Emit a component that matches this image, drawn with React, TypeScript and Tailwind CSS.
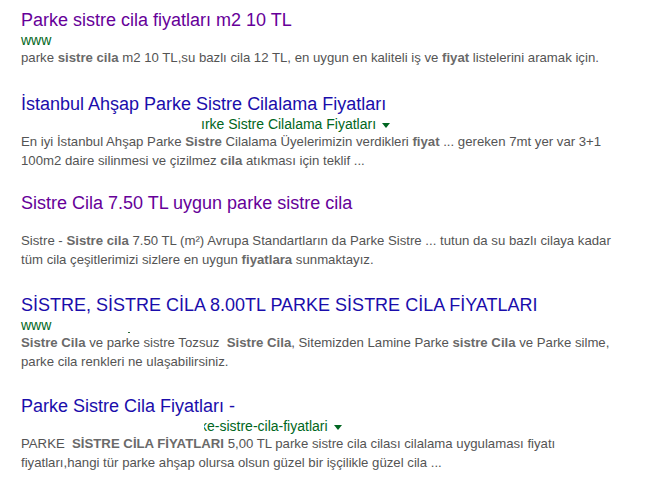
import React from "react";

const Arrow = () => (
  <span className="ml-[6px] inline-block h-0 w-0 border-x-[4px] border-t-[5px] border-x-transparent border-t-[#006621] align-middle" />
);

const B = ({ children }: { children: React.ReactNode }) => (
  <b className="font-bold text-[#6a6a6a]">{children}</b>
);

export default function App() {
  return (
    <div className="min-h-[484px] bg-white pl-[21px] pt-[9px] font-['Liberation_Sans',Arial,sans-serif]">
      {/* Result 1 */}
      <div className="mb-[25.5px]">
        <h3 className="text-[18px] font-normal leading-[22px] text-[#660099]">
          Parke sistre cila fiyatları m2 10 TL
        </h3>
        <div className="h-[18px] text-[14px] leading-[18px] text-[#006621]">www</div>
        <div className="text-[13.2px] leading-[18.5px] text-[#545454]">
          parke <B>sistre cila</B> m2 10 TL,su bazlı cila 12 TL, en uygun en kaliteli iş ve <B>fiyat</B> listelerini aramak için.
        </div>
      </div>

      {/* Result 2 */}
      <div className="mb-[22px]">
        <h3 className="text-[18px] font-normal leading-[22px] text-[#1a0dab]">
          İstanbul Ahşap Parke Sistre Cilalama Fiyatları
        </h3>
        <div className="h-[18px] pl-[180px] text-[14px] leading-[18px] text-[#006621]">
          ırke Sistre Cilalama Fiyatları
          <Arrow />
        </div>
        <div className="text-[13.2px] leading-[18.5px] text-[#545454]">
          En iyi İstanbul Ahşap Parke <B>Sistre</B> Cilalama Üyelerimizin verdikleri <B>fiyat</B> ... gereken 7mt yer var 3+1
          <br />
          100m2 daire silinmesi ve çizilmez <B>cila</B> atıkması için teklif ...
        </div>
      </div>

      {/* Result 3 */}
      <div className="mb-[25px]">
        <h3 className="text-[18px] font-normal leading-[22px] text-[#660099]">
          Sistre Cila 7.50 TL uygun parke sistre cila
        </h3>
        <div className="h-[18px]" />
        <div className="text-[13.2px] leading-[18.5px] text-[#545454]">
          Sistre - <B>Sistre cila</B> 7.50 TL (m²) Avrupa Standartların da Parke Sistre ... tutun da su bazlı cilaya kadar
          <br />
          tüm cila çeşitlerimizi sizlere en uygun <B>fiyatlara</B> sunmaktayız.
        </div>
      </div>

      {/* Result 4 */}
      <div className="mb-[24px]">
        <h3 className="text-[18px] font-normal leading-[22px] text-[#1a0dab]">
          SİSTRE, SİSTRE CİLA 8.00TL PARKE SİSTRE CİLA FİYATLARI
        </h3>
        <div className="relative h-[18px] text-[14px] leading-[18px] text-[#006621]">
          www
          <span className="absolute left-[107px] top-[16px] h-[1px] w-[2px] bg-[#2e6b3a]" />
        </div>
        <div className="text-[13.2px] leading-[18.5px] text-[#545454]">
          <B>Sistre Cila</B> ve parke sistre Tozsuz&nbsp; <B>Sistre Cila</B>, Sitemizden Lamine Parke <B>sistre Cila</B> ve Parke silme,
          <br />
          parke cila renkleri ne ulaşabilirsiniz.
        </div>
      </div>

      {/* Result 5 */}
      <div>
        <h3 className="text-[18px] font-normal leading-[22px] text-[#1a0dab]">
          Parke Sistre Cila Fiyatları -
        </h3>
        <div className="h-[18px] pl-[183px] text-[14px] leading-[18px] text-[#006621]">
          <span className="inline-block overflow-hidden align-top">
            <span className="ml-[-4px]">ke-sistre-cila-fiyatlari</span>
          </span>
          <Arrow />
        </div>
        <div className="text-[13.2px] leading-[18.5px] text-[#545454]">
          PARKE&nbsp; <B>SİSTRE CİLA FİYATLARI</B> 5,00 TL parke sistre cila cilası cilalama uygulaması fiyatı
          <br />
          fiyatları,hangi tür parke ahşap olursa olsun güzel bir işçilikle güzel cila ...
        </div>
      </div>
    </div>
  );
}
